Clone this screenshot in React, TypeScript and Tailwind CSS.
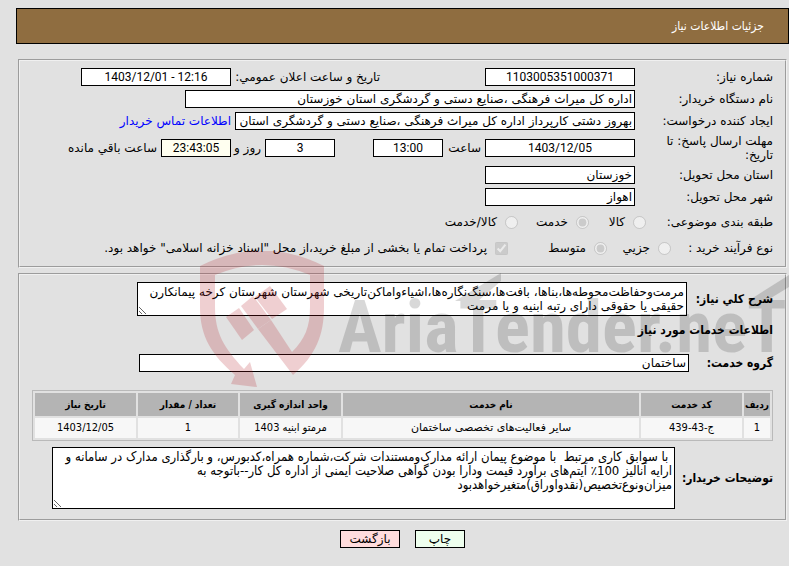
import clsx from "clsx";
import type { ReactNode } from "react";

const services = [
  { code: "ج-43-439", name: "سایر فعالیت‌های تخصصی ساختمان", unit: "مرمتو ابنیه 1403", count: "1", date: "1403/12/05" },
];

type FieldProps = {
  id: string;
  value: string;
  label?: string;
  dir?: "ltr" | "rtl";
  className?: string;
};

function Field({ id, value, label, dir, className }: FieldProps) {
  return (
    <input
      id={id}
      readOnly
      dir={dir}
      aria-label={label}
      defaultValue={value}
      className={clsx("h-[18px] shrink-0 border border-black px-[2px] outline-none", className)}
    />
  );
}

function NumberField({ className, ...props }: FieldProps) {
  return <Field {...props} dir="ltr" className={clsx("text-center font-['Roboto',sans-serif]", className)} />;
}

function Row({ id, label, className, children }: { id?: string; label: string; className?: string; children: ReactNode }) {
  return (
    <div className={clsx("flex items-center", className)}>
      <label htmlFor={id} className="w-[138px] shrink-0 pe-6">
        {label}
      </label>
      {children}
    </div>
  );
}

function Choice({ name, label, checked, className }: { name: string; label: string; checked?: boolean; className?: string }) {
  return (
    <label className={clsx("flex items-center gap-2 whitespace-nowrap", className)}>
      <input type="radio" name={name} disabled defaultChecked={checked} className="size-[13px] shrink-0" />
      {label}
    </label>
  );
}

function Watermark() {
  return (
    <svg
      viewBox="0 0 589 140"
      direction="ltr"
      className="pointer-events-none absolute -top-6 left-[180px] h-[140px] w-[589px] select-none"
      aria-hidden="true"
    >
      {/* shield with the gavel inside */}
      <g fill="#b4141e" opacity="0.2">
        <path d="M0 15 Q62 -16 124 15 V56 C124 84 116 104 93 124 L58 78 L71 69 L92 101 C105 88 110 76 110 56 V24 Q62 4 15 24 V56 C15 82 24 97 44 118 L50 111 L57 136 L31 133 L35 124 C12 104 0 86 0 56 Z" />
        <path d="M41 55 L53 45 L71 69 L58 78 Z" />
        <path d="M26 66 L39 57 L54 79 L42 89 Z" />
        <path d="M55 46 L70 35 L87 58 L72 68 Z" />
      </g>
      <g opacity="0.15">
        <text x="138" y="101" fontSize="73" fontWeight="bold" fontFamily="'Liberation Sans Narrow', 'Roboto Condensed', sans-serif">
          AriaTender.neT
        </text>
        <path d="M255 50 L301 22 V30 L278 50 Z" />
        <path d="M548 50 L589 24 V36 L566 50 Z" />
      </g>
    </svg>
  );
}

export default function App() {
  return (
    <div
      dir="rtl"
      className="min-h-screen bg-[#e1e1e1] pt-2 pb-4 font-['DejaVu_Sans',sans-serif] text-[12px] leading-[14px] text-black"
    >
      <header className="me-4 flex h-9 items-center border border-black bg-[#8f6d40] px-6 font-['DejaVu_Sans_Condensed',sans-serif] text-white">
        <h1>جزئیات اطلاعات نیاز</h1>
      </header>

      <main className="me-[18px] ms-[2px] mt-[15px]">
        <fieldset className="flex flex-col gap-1 border-2 border-[#f0f0f0] px-3 pt-[7px] pb-2 [border-style:groove]">
          <Row id="number" label="شماره نیاز:">
            <NumberField id="number" value="1103005351000371" className="w-[150px] bg-white" />
            <label htmlFor="announced" className="ms-[105px] w-[149px] shrink-0 whitespace-nowrap">
              تاریخ و ساعت اعلان عمومي:
            </label>
            <NumberField id="announced" value="1403/12/01 - 12:16" className="w-[150px] bg-white" />
          </Row>
          <Row id="buyer" label="نام دستگاه خریدار:">
            <Field id="buyer" value="اداره کل میراث فرهنگی ،صنایع دستی و گردشگری استان خوزستان" className="w-[450px] bg-white" />
          </Row>
          <Row id="creator" label="ایجاد کننده درخواست:">
            <Field
              id="creator"
              value="بهروز دشتی کارپرداز اداره کل میراث فرهنگی ،صنایع دستی و گردشگری استان خوزستان"
              className="w-[400px] bg-white"
            />
            <a href="#contact" className="ms-1 whitespace-nowrap text-[#0000ff]">
              اطلاعات تماس خریدار
            </a>
          </Row>
          <Row id="deadline" label="مهلت ارسال پاسخ: تا تاریخ:">
            <NumberField id="deadline" value="1403/12/05" className="w-[150px] bg-white" />
            <label htmlFor="hour" className="w-[42px] shrink-0 ps-1">
              ساعت
            </label>
            <NumberField id="hour" value="13:00" className="w-[70px] bg-white" />
            <NumberField id="days" label="روز" value="3" className="mr-[38px] w-[70px] bg-white" />
            <label htmlFor="days" className="w-[34px] shrink-0 ps-1 whitespace-nowrap">
              روز و
            </label>
            <NumberField id="left" value="23:43:05" className="w-[70px] bg-[#fffff0]" />
            <label htmlFor="left" className="ms-1 whitespace-nowrap">
              ساعت باقي مانده
            </label>
          </Row>
          <Row id="province" label="استان محل تحویل:">
            <Field id="province" value="خوزستان" className="w-[150px] bg-white" />
          </Row>
          <Row id="city" label="شهر محل تحویل:">
            <Field id="city" value="اهواز" className="w-[150px] bg-white" />
          </Row>
          <div role="radiogroup" aria-label="طبقه بندی موضوعی" className="flex h-6 items-center">
            <span className="w-[127px] shrink-0">طبقه بندی موضوعی:</span>
            <Choice name="category" label="کالا" className="w-[57px]" />
            <Choice name="category" label="خدمت" checked className="w-[71px]" />
            <Choice name="category" label="کالا/خدمت" />
          </div>
          <div role="radiogroup" aria-label="نوع فرآیند خرید" className="flex h-5 items-center whitespace-nowrap">
            <span className="w-[102px] shrink-0">نوع فرآیند خرید :</span>
            <Choice name="process" label="جزیي" className="w-[64px]" />
            <Choice name="process" label="متوسط" checked className="w-[99px]" />
            <label className="flex items-center gap-2">
              <input type="checkbox" disabled defaultChecked className="size-[13px]" />
              پرداخت تمام یا بخشی از مبلغ خرید،از محل "اسناد خزانه اسلامی" خواهد بود.
            </label>
          </div>
        </fieldset>

        <fieldset className="relative mt-[5px] border-2 border-[#f0f0f0] px-3 pt-[7px] pb-[10px] [border-style:groove]">
          <div className="flex items-center">
            <label htmlFor="summary" className="w-[86px] shrink-0 font-['DejaVu_Sans_Condensed',sans-serif] font-bold whitespace-nowrap">
              شرح کلي نیاز:
            </label>
            <textarea
              id="summary"
              readOnly
              defaultValue={"مرمت‌وحفاظت‌محوطه‌ها،بناها، بافت‌ها،سنگ‌نگاره‌ها،اشیاءواماکن‌تاریخی شهرستان شهرستان کرخه پیمانکارن\nحقیقی یا حقوقی دارای رتبه ابنیه و یا مرمت"}
              className="h-[34px] w-[550px] overflow-hidden border border-black bg-white p-[2px] outline-none"
            />
          </div>
          <h2 className="flex h-7 items-center font-['DejaVu_Sans_Condensed',sans-serif] font-bold">اطلاعات خدمات مورد نیاز</h2>
          <div className="mt-[10px] flex items-center">
            <label htmlFor="group" className="w-[84px] shrink-0 font-['DejaVu_Sans_Condensed',sans-serif] font-bold">
              گروه خدمت:
            </label>
            <Field id="group" value="ساختمان" className="w-[550px] bg-white" />
          </div>

          <table className="mt-[18px] w-full table-fixed border-separate border-spacing-[2px] border border-[#b9b9b9] text-center font-['DejaVu_Sans_Condensed',sans-serif] text-[11px]">
            <thead>
              <tr className="h-[23px] bg-[#b4b4b4] text-[10px]">
                <th className="w-[26px]">ردیف</th>
                <th className="w-[101px]">کد خدمت</th>
                <th>نام خدمت</th>
                <th className="w-[101px]">واحد اندازه گیری</th>
                <th className="w-[100px]">تعداد / مقدار</th>
                <th className="w-[101px]">تاریخ نیاز</th>
              </tr>
            </thead>
            <tbody>
              {services.map((s, i) => (
                <tr key={s.code} className="h-[20px] bg-[#f7f7f7]">
                  <td>{i + 1}</td>
                  <td>{s.code}</td>
                  <td className="font-['DejaVu_Sans',sans-serif]">{s.name}</td>
                  <td>{s.unit}</td>
                  <td>{s.count}</td>
                  <td>{s.date}</td>
                </tr>
              ))}
            </tbody>
          </table>

          <div className="mt-[6px] flex items-center">
            <label htmlFor="notes" className="w-[98px] shrink-0 font-['DejaVu_Sans_Condensed',sans-serif] font-bold whitespace-nowrap">
              توضیحات خریدار:
            </label>
            <textarea
              id="notes"
              readOnly
              defaultValue={" با سوابق کاری مرتبط  با موضوع پیمان ارائه مدارک‌ومستندات شرکت،شماره همراه،کدبورس، و بارگذاری مدارک در سامانه و\nارایه آنالیز 100٪ آیتم‌های برآورد قیمت ودارا بودن گواهی صلاحیت ایمنی از اداره کل کار--باتوجه به\nمیزان‌ونوع‌تخصیص(نقدواوراق)متغیرخواهدبود"}
              className="h-[62px] w-[623px] overflow-hidden border border-black bg-white p-[2px] font-['DejaVu_Sans_Condensed',sans-serif] text-[13px] outline-none"
            />
          </div>
          <Watermark />
        </fieldset>

        <div className="mt-[9px] flex justify-center gap-[15px]">
          <button type="button" className="h-[18px] w-[50px] border border-black bg-[#eeffee]">
            چاپ
          </button>
          <button type="button" className="h-[18px] w-[60px] border border-black bg-[#ffdddd]">
            بازگشت
          </button>
        </div>
      </main>
    </div>
  );
}
